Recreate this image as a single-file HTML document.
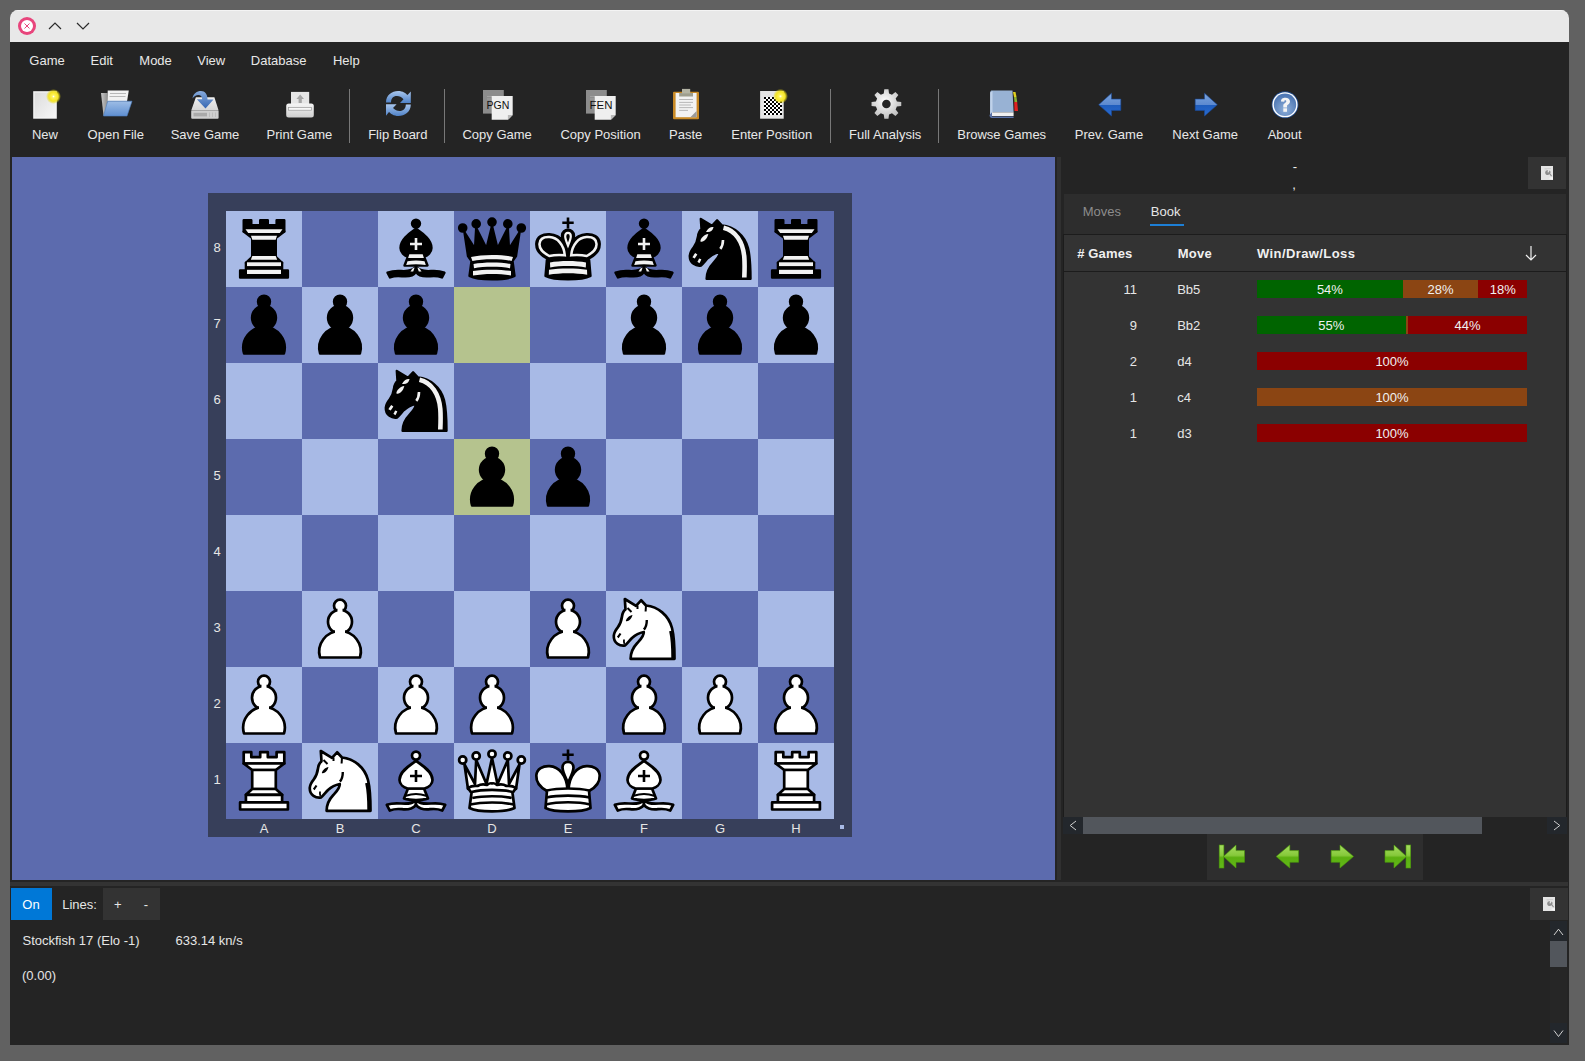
<!DOCTYPE html>
<html><head><meta charset="utf-8"><style>
html,body{margin:0;padding:0;width:1585px;height:1061px;overflow:hidden;background:#616161;font-family:"Liberation Sans", sans-serif;}
</style></head><body>
<div style="position:relative;width:1585px;height:1061px;overflow:hidden">
<div style="position:absolute;left:10px;top:10px;width:1559px;height:1035px;background:#242424;border-radius:8px 8px 0 0;overflow:hidden"><div style="position:absolute;left:0;top:0;width:1559px;height:32px;background:#e8e8e8;border-top:1px solid #f4f4f4;box-sizing:border-box"></div></div><svg style="position:absolute;left:16px;top:15px;" width="22" height="22" viewBox="0 0 22 22"><circle cx="11" cy="11" r="9" fill="#e8457c"/><circle cx="11" cy="11" r="6" fill="#fff"/><path d="M8.5 8.5 L13.5 13.5 M13.5 8.5 L8.5 13.5" stroke="#e8457c" stroke-width="1"/></svg><svg style="position:absolute;left:47px;top:20px;" width="16" height="12" viewBox="0 0 16 12"><path d="M2 9 L8 3 L14 9" fill="none" stroke="#2b2b2b" stroke-width="1.2"/></svg><svg style="position:absolute;left:75px;top:20px;" width="16" height="12" viewBox="0 0 16 12"><path d="M2 3 L8 9 L14 3" fill="none" stroke="#2b2b2b" stroke-width="1.2"/></svg><div style="position:absolute;left:-252.95px;width:600px;text-align:center;top:54.30px;font-size:13px;line-height:13px;color:#e8e8e8;font-weight:400;white-space:pre;">Game</div><div style="position:absolute;left:-198.3px;width:600px;text-align:center;top:54.30px;font-size:13px;line-height:13px;color:#e8e8e8;font-weight:400;white-space:pre;">Edit</div><div style="position:absolute;left:-144.45px;width:600px;text-align:center;top:54.30px;font-size:13px;line-height:13px;color:#e8e8e8;font-weight:400;white-space:pre;">Mode</div><div style="position:absolute;left:-88.75px;width:600px;text-align:center;top:54.30px;font-size:13px;line-height:13px;color:#e8e8e8;font-weight:400;white-space:pre;">View</div><div style="position:absolute;left:-21.350000000000023px;width:600px;text-align:center;top:54.30px;font-size:13px;line-height:13px;color:#e8e8e8;font-weight:400;white-space:pre;">Database</div><div style="position:absolute;left:46.25px;width:600px;text-align:center;top:54.30px;font-size:13px;line-height:13px;color:#e8e8e8;font-weight:400;white-space:pre;">Help</div><div style="position:absolute;left:-255.0px;width:600px;text-align:center;top:128.30px;font-size:13px;line-height:13px;color:#e8e8e8;font-weight:400;white-space:pre;">New</div><div style="position:absolute;left:-184.25px;width:600px;text-align:center;top:128.30px;font-size:13px;line-height:13px;color:#e8e8e8;font-weight:400;white-space:pre;">Open File</div><div style="position:absolute;left:-95.0px;width:600px;text-align:center;top:128.30px;font-size:13px;line-height:13px;color:#e8e8e8;font-weight:400;white-space:pre;">Save Game</div><div style="position:absolute;left:-0.6000000000000227px;width:600px;text-align:center;top:128.30px;font-size:13px;line-height:13px;color:#e8e8e8;font-weight:400;white-space:pre;">Print Game</div><div style="position:absolute;left:97.79999999999995px;width:600px;text-align:center;top:128.30px;font-size:13px;line-height:13px;color:#e8e8e8;font-weight:400;white-space:pre;">Flip Board</div><div style="position:absolute;left:197.14999999999998px;width:600px;text-align:center;top:128.30px;font-size:13px;line-height:13px;color:#e8e8e8;font-weight:400;white-space:pre;">Copy Game</div><div style="position:absolute;left:300.6px;width:600px;text-align:center;top:128.30px;font-size:13px;line-height:13px;color:#e8e8e8;font-weight:400;white-space:pre;">Copy Position</div><div style="position:absolute;left:385.70000000000005px;width:600px;text-align:center;top:128.30px;font-size:13px;line-height:13px;color:#e8e8e8;font-weight:400;white-space:pre;">Paste</div><div style="position:absolute;left:471.75px;width:600px;text-align:center;top:128.30px;font-size:13px;line-height:13px;color:#e8e8e8;font-weight:400;white-space:pre;">Enter Position</div><div style="position:absolute;left:585.2px;width:600px;text-align:center;top:128.30px;font-size:13px;line-height:13px;color:#e8e8e8;font-weight:400;white-space:pre;">Full Analysis</div><div style="position:absolute;left:701.7px;width:600px;text-align:center;top:128.30px;font-size:13px;line-height:13px;color:#e8e8e8;font-weight:400;white-space:pre;">Browse Games</div><div style="position:absolute;left:808.95px;width:600px;text-align:center;top:128.30px;font-size:13px;line-height:13px;color:#e8e8e8;font-weight:400;white-space:pre;">Prev. Game</div><div style="position:absolute;left:905.1500000000001px;width:600px;text-align:center;top:128.30px;font-size:13px;line-height:13px;color:#e8e8e8;font-weight:400;white-space:pre;">Next Game</div><div style="position:absolute;left:984.6500000000001px;width:600px;text-align:center;top:128.30px;font-size:13px;line-height:13px;color:#e8e8e8;font-weight:400;white-space:pre;">About</div><div style="position:absolute;left:349px;top:89px;width:1px;height:54px;background:#787878;"></div><div style="position:absolute;left:444px;top:89px;width:1px;height:54px;background:#787878;"></div><div style="position:absolute;left:830px;top:89px;width:1px;height:54px;background:#787878;"></div><div style="position:absolute;left:938px;top:89px;width:1px;height:54px;background:#787878;"></div><svg style="position:absolute;left:26px;top:84px;" width="40" height="40" viewBox="0 0 40 40"><defs><radialGradient id="glow"><stop offset="0" stop-color="#ffffff"/><stop offset="0.2" stop-color="#fff45c"/><stop offset="0.62" stop-color="#f4e424" stop-opacity="1"/><stop offset="1" stop-color="#e8d800" stop-opacity="0"/></radialGradient><linearGradient id="pg1" x1="0" y1="0" x2="1" y2="1"><stop offset="0" stop-color="#dcdcdc"/><stop offset="1" stop-color="#f6f6f6"/></linearGradient></defs><rect x="7.2" y="7.2" width="23.6" height="27.5" fill="#f4f4f4"/><rect x="8.6" y="8.6" width="20.8" height="24.7" fill="url(#pg1)"/><circle cx="27.5" cy="12.5" r="7.5" fill="url(#glow)"/></svg><svg style="position:absolute;left:96px;top:84px;" width="40" height="40" viewBox="0 0 40 40"><defs><linearGradient id="fo" x1="0" y1="0" x2="0" y2="1"><stop offset="0" stop-color="#9ebde6"/><stop offset="1" stop-color="#5f8fd0"/></linearGradient><linearGradient id="fb" x1="0" y1="0" x2="1" y2="0"><stop offset="0" stop-color="#c8c8c8"/><stop offset="1" stop-color="#8a8a8a"/></linearGradient></defs><path d="M5 9 H11.5 L12 31.5 H7.5 Z" fill="url(#fb)"/><path d="M11.7 6.5 H32.8 L31 17.5 H11.5 Z" fill="#f2f2f2"/><path d="M14 9.5 H30 M13.5 12.5 H29.5" stroke="#b8b8b8" stroke-width="1.2"/><path d="M11.7 17.2 H36 L31 32 H7.5 Z" fill="url(#fo)" stroke="#4d7fc2" stroke-width="0.6"/></svg><svg style="position:absolute;left:185px;top:84px;" width="40" height="40" viewBox="0 0 40 40"><defs><linearGradient id="sv" x1="0" y1="0" x2="0" y2="1"><stop offset="0" stop-color="#f0f0f0"/><stop offset="1" stop-color="#d6d6d6"/></linearGradient><linearGradient id="sa" x1="0" y1="0" x2="0" y2="1"><stop offset="0" stop-color="#86aadc"/><stop offset="1" stop-color="#3566b2"/></linearGradient></defs><path d="M10.9 13.2 H29.4 L33.6 26.4 H6.2 Z" fill="url(#sv)"/><rect x="6.2" y="26.4" width="27.4" height="8.3" rx="1" fill="#cfcfcf"/><rect x="8.5" y="28.8" width="13.5" height="3.6" fill="#aaaaaa"/><path d="M24.5 28.5 V33 M27.5 28.5 V33 M30.5 28.5 V33" stroke="#bdbdbd" stroke-width="1"/><path d="M7.5 14.5 C8 9.5 12 7 16 7 C20 7 22.5 10 22.5 15.5 H28.5 L20.5 24.5 L11.8 15.2 H17.2 C17 12 15.5 11 13.5 11 C11 11 9 12.5 7.5 14.5 Z" fill="url(#sa)"/></svg><svg style="position:absolute;left:280px;top:84px;" width="40" height="40" viewBox="0 0 40 40"><defs><linearGradient id="pr" x1="0" y1="0" x2="0" y2="1"><stop offset="0" stop-color="#f6f6f6"/><stop offset="1" stop-color="#cfcfcf"/></linearGradient></defs><rect x="11" y="7.9" width="18.2" height="14" fill="#e6e6e6"/><path d="M20.2 10.5 L24 15 H21.8 V19 H18.6 V15 H16.4 Z" fill="#a6a6a6"/><rect x="6.2" y="19.4" width="27.6" height="14" rx="2.5" fill="url(#pr)"/><rect x="8.5" y="23.6" width="23" height="2.6" fill="#f8f8f8" stroke="#9a9a9a" stroke-width="0.7"/></svg><svg style="position:absolute;left:378px;top:84px;" width="40" height="40" viewBox="0 0 40 40"><defs><linearGradient id="fl" x1="0" y1="0" x2="0" y2="1"><stop offset="0" stop-color="#a9c6ec"/><stop offset="1" stop-color="#4f82c8"/></linearGradient></defs><path d="M8 18.5 C8 11 14 7 20 7 C25 7 28 9.5 29.5 11 L32.8 7.5 V19 H22 L25.5 15.2 C23.5 13 21.5 12 19 12 C15 12 13 14.5 13 18.5 Z" fill="url(#fl)"/><path d="M32.8 20.5 C32.8 28 26.5 32 20.5 32 C15.5 32 12.5 29.5 11 28 L8 31.8 V20.2 H18.6 L15 24 C17 26 19 27 21.5 27 C25.5 27 27.8 24.5 27.8 20.5 Z" fill="url(#fl)"/></svg><svg style="position:absolute;left:477px;top:84px;" width="40" height="40" viewBox="0 0 40 40"><rect x="6" y="6" width="20.8" height="23.6" fill="#8c8c8c"/><path d="M10 12.5 H20 M10 15 H14" stroke="#a8a8a8" stroke-width="0.8"/><path d="M14.7 12 H35.7 V31 L30.9 35.8 H14.7 Z" fill="#efefef"/><path d="M30.9 35.8 V31 H35.7 Z" fill="#b8b8b8"/><text x="21" y="25.1" text-anchor="middle" font-family="Liberation Sans" font-size="10.8" fill="#111" textLength="22.9" lengthAdjust="spacingAndGlyphs">PGN</text></svg><svg style="position:absolute;left:580px;top:84px;" width="40" height="40" viewBox="0 0 40 40"><rect x="6" y="6" width="20.8" height="23.6" fill="#8c8c8c"/><path d="M10 12.5 H20 M10 15 H14" stroke="#a8a8a8" stroke-width="0.8"/><path d="M14.7 12 H35.7 V31 L30.9 35.8 H14.7 Z" fill="#efefef"/><path d="M30.9 35.8 V31 H35.7 Z" fill="#b8b8b8"/><text x="21" y="25.1" text-anchor="middle" font-family="Liberation Sans" font-size="10.8" fill="#111" textLength="22.9" lengthAdjust="spacingAndGlyphs">FEN</text></svg><svg style="position:absolute;left:666px;top:84px;" width="40" height="40" viewBox="0 0 40 40"><rect x="7" y="7.7" width="26" height="27.6" rx="1" fill="#c98a26"/><rect x="9.6" y="9" width="21" height="24.2" fill="#f2f2f2"/><path d="M13.2 9 H27 V12.5 H13.2 Z" fill="#9e9e8e"/><rect x="16" y="4.9" width="8.2" height="4.5" fill="#b4b4a4"/><path d="M13.2 15.5 H27 M13.2 18.4 H27 M13.2 21 H25 M13.2 23.6 H27 M13.2 26.4 H22" stroke="#b0b0b0" stroke-width="0.9"/><path d="M24.3 33.2 L30.6 27 V33.2 Z" fill="#9a9a9a"/></svg><svg style="position:absolute;left:752px;top:84px;" width="40" height="40" viewBox="0 0 40 40"><defs><radialGradient id="glow2"><stop offset="0" stop-color="#ffffff"/><stop offset="0.2" stop-color="#fff45c"/><stop offset="0.62" stop-color="#f4e424" stop-opacity="1"/><stop offset="1" stop-color="#e8d800" stop-opacity="0"/></radialGradient></defs><rect x="8.1" y="7" width="23.6" height="27.7" fill="#e4e4e4"/><rect x="12" y="13" width="17.8" height="18" fill="#fff"/><rect x="12" y="13" width="2" height="2" fill="#000"/><rect x="12" y="17" width="2" height="2" fill="#000"/><rect x="12" y="21" width="2" height="2" fill="#000"/><rect x="12" y="25" width="2" height="2" fill="#000"/><rect x="12" y="29" width="2" height="2" fill="#000"/><rect x="14" y="15" width="2" height="2" fill="#000"/><rect x="14" y="19" width="2" height="2" fill="#000"/><rect x="14" y="23" width="2" height="2" fill="#000"/><rect x="14" y="27" width="2" height="2" fill="#000"/><rect x="16" y="13" width="2" height="2" fill="#000"/><rect x="16" y="17" width="2" height="2" fill="#000"/><rect x="16" y="21" width="2" height="2" fill="#000"/><rect x="16" y="25" width="2" height="2" fill="#000"/><rect x="16" y="29" width="2" height="2" fill="#000"/><rect x="18" y="15" width="2" height="2" fill="#000"/><rect x="18" y="19" width="2" height="2" fill="#000"/><rect x="18" y="23" width="2" height="2" fill="#000"/><rect x="18" y="27" width="2" height="2" fill="#000"/><rect x="20" y="13" width="2" height="2" fill="#000"/><rect x="20" y="17" width="2" height="2" fill="#000"/><rect x="20" y="21" width="2" height="2" fill="#000"/><rect x="20" y="25" width="2" height="2" fill="#000"/><rect x="20" y="29" width="2" height="2" fill="#000"/><rect x="22" y="15" width="2" height="2" fill="#000"/><rect x="22" y="19" width="2" height="2" fill="#000"/><rect x="22" y="23" width="2" height="2" fill="#000"/><rect x="22" y="27" width="2" height="2" fill="#000"/><rect x="24" y="13" width="2" height="2" fill="#000"/><rect x="24" y="17" width="2" height="2" fill="#000"/><rect x="24" y="21" width="2" height="2" fill="#000"/><rect x="24" y="25" width="2" height="2" fill="#000"/><rect x="24" y="29" width="2" height="2" fill="#000"/><rect x="26" y="15" width="2" height="2" fill="#000"/><rect x="26" y="19" width="2" height="2" fill="#000"/><rect x="26" y="23" width="2" height="2" fill="#000"/><rect x="26" y="27" width="2" height="2" fill="#000"/><rect x="28" y="13" width="2" height="2" fill="#000"/><rect x="28" y="17" width="2" height="2" fill="#000"/><rect x="28" y="21" width="2" height="2" fill="#000"/><rect x="28" y="25" width="2" height="2" fill="#000"/><rect x="28" y="29" width="2" height="2" fill="#000"/><circle cx="28.5" cy="12.3" r="7.5" fill="url(#glow2)"/></svg><svg style="position:absolute;left:866px;top:84px;" width="40" height="40" viewBox="0 0 40 40"><defs><radialGradient id="ge" cx="0.45" cy="0.4" r="0.7"><stop offset="0" stop-color="#ffffff"/><stop offset="1" stop-color="#b4b4b4"/></radialGradient></defs><path d="M17.79,9.52 L18.31,5.15 L22.49,5.15 L23.01,9.52 L25.96,10.74 L29.43,8.02 L32.38,10.97 L29.66,14.44 L30.88,17.39 L35.25,17.91 L35.25,22.09 L30.88,22.61 L29.66,25.56 L32.38,29.03 L29.43,31.98 L25.96,29.26 L23.01,30.48 L22.49,34.85 L18.31,34.85 L17.79,30.48 L14.84,29.26 L11.37,31.98 L8.42,29.03 L11.14,25.56 L9.92,22.61 L5.55,22.09 L5.55,17.91 L9.92,17.39 L11.14,14.44 L8.42,10.97 L11.37,8.02 L14.84,10.74 Z" fill="url(#ge)"/><circle cx="20.4" cy="20" r="4.3" fill="#242424"/></svg><svg style="position:absolute;left:983px;top:84px;" width="40" height="40" viewBox="0 0 40 40"><path d="M30 8 H32.5 L33.5 13 H31 Z" fill="#e0d020"/><path d="M31 13 H33.5 L34.2 18 H31.5 Z" fill="#8cb030"/><path d="M31.2 18 H34.2 L35 27 H31.5 Z" fill="#e02020"/><path d="M7.2 8.5 C7.2 7 8 6.4 9 6.4 H29.5 L30.6 28.3 H9 L7 31 Z" fill="#98b2d4"/><path d="M7.2 8.5 V31 L9.5 28.3 V7" fill="#c0d2ea"/><path d="M9 28.3 H30.6 V32 H9 Z" fill="#f0f0f0"/><path d="M6.5 31 L9 28.3 V32.5 H30.6 V34 H9 C7.5 34 6.5 33 6.5 31 Z" fill="#5a72a8"/></svg><svg style="position:absolute;left:1090px;top:84px;" width="40" height="40" viewBox="0 0 40 40"><defs><linearGradient id="ar" x1="0" y1="0" x2="0" y2="1"><stop offset="0" stop-color="#7aa3dc"/><stop offset="0.5" stop-color="#5d8ad0"/><stop offset="0.52" stop-color="#1f5dbd"/><stop offset="1" stop-color="#2a6cd0"/></linearGradient></defs><path d="M8.7 20.75 L21.5 9.2 V15.1 H30.8 V26.4 H21.5 V32 Z" fill="url(#ar)" stroke="#1a4a9a" stroke-width="0.6"/></svg><svg style="position:absolute;left:1187px;top:84px;" width="40" height="40" viewBox="0 0 40 40"><defs><linearGradient id="ar2" x1="0" y1="0" x2="0" y2="1"><stop offset="0" stop-color="#7aa3dc"/><stop offset="0.5" stop-color="#5d8ad0"/><stop offset="0.52" stop-color="#1f5dbd"/><stop offset="1" stop-color="#2a6cd0"/></linearGradient></defs><path d="M30.3 20.75 L17.5 9.2 V15.1 H8.2 V26.4 H17.5 V32 Z" fill="url(#ar2)" stroke="#1a4a9a" stroke-width="0.6"/></svg><svg style="position:absolute;left:1265px;top:84px;" width="40" height="40" viewBox="0 0 40 40"><defs><radialGradient id="ab" cx="0.5" cy="0.7" r="0.6"><stop offset="0" stop-color="#8fb0da"/><stop offset="1" stop-color="#4f78b4"/></radialGradient></defs><circle cx="20" cy="20.75" r="13.4" fill="#1e4a8c"/><circle cx="20" cy="20.75" r="12.6" fill="#ffffff"/><circle cx="20" cy="20.75" r="11.2" fill="url(#ab)"/><path d="M16 17.5 C16 14.5 18 13.7 20.3 13.7 C23 13.7 25 15 25 17.5 C25 19.8 23 20.5 22 21.5 V23.5 H18.3 V21 C18.3 19.5 21.3 18.7 21.3 17.5 C21.3 16.5 20.8 16.3 20.2 16.3 C19.5 16.3 19.3 16.8 19.3 17.8 Z" fill="#f4f4f4"/><rect x="18.3" y="24.3" width="3.7" height="3.5" fill="#f4f4f4"/></svg><div style="position:absolute;left:12px;top:157px;width:1043px;height:723px;background:#5c6bae;"></div><div style="position:absolute;left:208px;top:193px;width:644px;height:644px;background:#373f5a;"></div><svg style="position:absolute;left:226px;top:211px;" width="608" height="608" viewBox="0 0 608 608"><rect x="0" y="0" width="76" height="76" fill="#a8bae6"/><rect x="76" y="0" width="76" height="76" fill="#5c6bae"/><rect x="152" y="0" width="76" height="76" fill="#a8bae6"/><rect x="228" y="0" width="76" height="76" fill="#5c6bae"/><rect x="304" y="0" width="76" height="76" fill="#a8bae6"/><rect x="380" y="0" width="76" height="76" fill="#5c6bae"/><rect x="456" y="0" width="76" height="76" fill="#a8bae6"/><rect x="532" y="0" width="76" height="76" fill="#5c6bae"/><rect x="0" y="76" width="76" height="76" fill="#5c6bae"/><rect x="76" y="76" width="76" height="76" fill="#a8bae6"/><rect x="152" y="76" width="76" height="76" fill="#5c6bae"/><rect x="228" y="76" width="76" height="76" fill="#b5c38e"/><rect x="304" y="76" width="76" height="76" fill="#5c6bae"/><rect x="380" y="76" width="76" height="76" fill="#a8bae6"/><rect x="456" y="76" width="76" height="76" fill="#5c6bae"/><rect x="532" y="76" width="76" height="76" fill="#a8bae6"/><rect x="0" y="152" width="76" height="76" fill="#a8bae6"/><rect x="76" y="152" width="76" height="76" fill="#5c6bae"/><rect x="152" y="152" width="76" height="76" fill="#a8bae6"/><rect x="228" y="152" width="76" height="76" fill="#5c6bae"/><rect x="304" y="152" width="76" height="76" fill="#a8bae6"/><rect x="380" y="152" width="76" height="76" fill="#5c6bae"/><rect x="456" y="152" width="76" height="76" fill="#a8bae6"/><rect x="532" y="152" width="76" height="76" fill="#5c6bae"/><rect x="0" y="228" width="76" height="76" fill="#5c6bae"/><rect x="76" y="228" width="76" height="76" fill="#a8bae6"/><rect x="152" y="228" width="76" height="76" fill="#5c6bae"/><rect x="228" y="228" width="76" height="76" fill="#b5c38e"/><rect x="304" y="228" width="76" height="76" fill="#5c6bae"/><rect x="380" y="228" width="76" height="76" fill="#a8bae6"/><rect x="456" y="228" width="76" height="76" fill="#5c6bae"/><rect x="532" y="228" width="76" height="76" fill="#a8bae6"/><rect x="0" y="304" width="76" height="76" fill="#a8bae6"/><rect x="76" y="304" width="76" height="76" fill="#5c6bae"/><rect x="152" y="304" width="76" height="76" fill="#a8bae6"/><rect x="228" y="304" width="76" height="76" fill="#5c6bae"/><rect x="304" y="304" width="76" height="76" fill="#a8bae6"/><rect x="380" y="304" width="76" height="76" fill="#5c6bae"/><rect x="456" y="304" width="76" height="76" fill="#a8bae6"/><rect x="532" y="304" width="76" height="76" fill="#5c6bae"/><rect x="0" y="380" width="76" height="76" fill="#5c6bae"/><rect x="76" y="380" width="76" height="76" fill="#a8bae6"/><rect x="152" y="380" width="76" height="76" fill="#5c6bae"/><rect x="228" y="380" width="76" height="76" fill="#a8bae6"/><rect x="304" y="380" width="76" height="76" fill="#5c6bae"/><rect x="380" y="380" width="76" height="76" fill="#a8bae6"/><rect x="456" y="380" width="76" height="76" fill="#5c6bae"/><rect x="532" y="380" width="76" height="76" fill="#a8bae6"/><rect x="0" y="456" width="76" height="76" fill="#a8bae6"/><rect x="76" y="456" width="76" height="76" fill="#5c6bae"/><rect x="152" y="456" width="76" height="76" fill="#a8bae6"/><rect x="228" y="456" width="76" height="76" fill="#5c6bae"/><rect x="304" y="456" width="76" height="76" fill="#a8bae6"/><rect x="380" y="456" width="76" height="76" fill="#5c6bae"/><rect x="456" y="456" width="76" height="76" fill="#a8bae6"/><rect x="532" y="456" width="76" height="76" fill="#5c6bae"/><rect x="0" y="532" width="76" height="76" fill="#5c6bae"/><rect x="76" y="532" width="76" height="76" fill="#a8bae6"/><rect x="152" y="532" width="76" height="76" fill="#5c6bae"/><rect x="228" y="532" width="76" height="76" fill="#a8bae6"/><rect x="304" y="532" width="76" height="76" fill="#5c6bae"/><rect x="380" y="532" width="76" height="76" fill="#a8bae6"/><rect x="456" y="532" width="76" height="76" fill="#5c6bae"/><rect x="532" y="532" width="76" height="76" fill="#a8bae6"/></svg><div style="position:absolute;left:840px;top:825px;width:4px;height:4px;background:#a8bae6;"></div><div style="position:absolute;left:-83px;width:600px;text-align:center;top:241.40px;font-size:13px;line-height:13px;color:#e6e6e6;font-weight:400;white-space:pre;">8</div><div style="position:absolute;left:-36px;width:600px;text-align:center;top:822.00px;font-size:13px;line-height:13px;color:#e6e6e6;font-weight:400;white-space:pre;">A</div><div style="position:absolute;left:-83px;width:600px;text-align:center;top:317.40px;font-size:13px;line-height:13px;color:#e6e6e6;font-weight:400;white-space:pre;">7</div><div style="position:absolute;left:40px;width:600px;text-align:center;top:822.00px;font-size:13px;line-height:13px;color:#e6e6e6;font-weight:400;white-space:pre;">B</div><div style="position:absolute;left:-83px;width:600px;text-align:center;top:393.40px;font-size:13px;line-height:13px;color:#e6e6e6;font-weight:400;white-space:pre;">6</div><div style="position:absolute;left:116px;width:600px;text-align:center;top:822.00px;font-size:13px;line-height:13px;color:#e6e6e6;font-weight:400;white-space:pre;">C</div><div style="position:absolute;left:-83px;width:600px;text-align:center;top:469.40px;font-size:13px;line-height:13px;color:#e6e6e6;font-weight:400;white-space:pre;">5</div><div style="position:absolute;left:192px;width:600px;text-align:center;top:822.00px;font-size:13px;line-height:13px;color:#e6e6e6;font-weight:400;white-space:pre;">D</div><div style="position:absolute;left:-83px;width:600px;text-align:center;top:545.40px;font-size:13px;line-height:13px;color:#e6e6e6;font-weight:400;white-space:pre;">4</div><div style="position:absolute;left:268px;width:600px;text-align:center;top:822.00px;font-size:13px;line-height:13px;color:#e6e6e6;font-weight:400;white-space:pre;">E</div><div style="position:absolute;left:-83px;width:600px;text-align:center;top:621.40px;font-size:13px;line-height:13px;color:#e6e6e6;font-weight:400;white-space:pre;">3</div><div style="position:absolute;left:344px;width:600px;text-align:center;top:822.00px;font-size:13px;line-height:13px;color:#e6e6e6;font-weight:400;white-space:pre;">F</div><div style="position:absolute;left:-83px;width:600px;text-align:center;top:697.40px;font-size:13px;line-height:13px;color:#e6e6e6;font-weight:400;white-space:pre;">2</div><div style="position:absolute;left:420px;width:600px;text-align:center;top:822.00px;font-size:13px;line-height:13px;color:#e6e6e6;font-weight:400;white-space:pre;">G</div><div style="position:absolute;left:-83px;width:600px;text-align:center;top:773.40px;font-size:13px;line-height:13px;color:#e6e6e6;font-weight:400;white-space:pre;">1</div><div style="position:absolute;left:496px;width:600px;text-align:center;top:822.00px;font-size:13px;line-height:13px;color:#e6e6e6;font-weight:400;white-space:pre;">H</div><svg style="position:absolute;left:226px;top:211px;" width="608" height="608" viewBox="0 0 608 608"><defs><symbol id="bp" viewBox="0 0 76 76"><g fill="#000" stroke="#000" stroke-width="2.4" stroke-linejoin="round"><circle cx="38" cy="14.7" r="6"/><circle cx="38" cy="30.8" r="12"/><path d="M18,66.5 A20.8,20.8 0 1 1 58,66.5 Z"/></g><g fill="#f2f2f2"></g></symbol><symbol id="wp" viewBox="0 0 76 76"><g fill="#fff" stroke="#000" stroke-width="2.7" stroke-linejoin="round"><circle cx="38" cy="14.7" r="6"/><circle cx="38" cy="30.8" r="12"/><path d="M18,66.5 A20.8,20.8 0 1 1 58,66.5 Z"/></g><rect x="35.5" y="17" width="5" height="6" fill="#fff"/><rect x="33" y="38" width="10" height="6" fill="#fff"/></symbol><symbol id="br" viewBox="0 0 76 76"><g fill="#000" stroke="#000" stroke-width="2.4" stroke-linejoin="round"><path d="M17.7,9.2 H25.3 V14.2 H34.2 V9.2 H41.8 V14.2 H50.6 V9.2 H58.3 V20.5 H17.7 Z"/><path d="M17.7,20.5 H58.3 L49.8,27 H26.2 Z"/><rect x="26.2" y="27" width="23.6" height="19"/><path d="M26.2,46 H49.8 L56.1,51.8 H19.9 Z"/><rect x="19.9" y="51.8" width="36.2" height="7.6"/><rect x="14.1" y="59.4" width="47.8" height="7.1"/></g><g fill="#f2f2f2"><path d="M19.5,18.3 H56.5 L53.8,22 H22.2 Z"/><path d="M25,24.7 H51 L49.7,28.8 H26.3 Z"/><path d="M26.3,45 H49.7 L51.2,48.8 H24.8 Z"/><rect x="21" y="51.3" width="34" height="3.8"/><rect x="21" y="58.8" width="34" height="4.2"/></g></symbol><symbol id="wr" viewBox="0 0 76 76"><g fill="#fff" stroke="#000" stroke-width="2.7" stroke-linejoin="round"><path d="M17.7,9.2 H25.3 V14.2 H34.2 V9.2 H41.8 V14.2 H50.6 V9.2 H58.3 V20.5 H17.7 Z"/><path d="M17.7,20.5 H58.3 L49.8,27 H26.2 Z"/><rect x="26.2" y="27" width="23.6" height="19"/><path d="M26.2,46 H49.8 L56.1,51.8 H19.9 Z"/><rect x="19.9" y="51.8" width="36.2" height="7.6"/><rect x="14.1" y="59.4" width="47.8" height="7.1"/></g></symbol><symbol id="bb" viewBox="0 0 76 76"><g fill="#000" stroke="#000" stroke-width="2.4" stroke-linejoin="round"><circle cx="38" cy="12.6" r="4"/><path d="M38,17.8 C33,21.5 22.5,28 22.5,37 C22.5,41.5 26.5,44.5 29.5,45.5 H46.5 C49.5,44.5 53.5,41.5 53.5,37 C53.5,28 43,21.5 38,17.8 Z"/><path d="M30,45.5 H46 L49.5,54.5 H26.5 Z"/><path d="M38,55.5 C35.5,59.5 31,60.5 23,60 C17,59.6 13,60.3 9.5,61.7 L12,66.5 C15.5,65 19.5,64.7 24,65.2 C31,66 36,64 38,60.8 C40,64 45,66 52,65.2 C56.5,64.7 60.5,65 64,66.5 L66.5,61.7 C63,60.3 59,59.6 53,60 C45,60.5 40.5,59.5 38,55.5 Z"/></g><g fill="#f2f2f2"><path d="M36.7,27 H39.3 V31.7 H44 V34.3 H39.3 V39 H36.7 V34.3 H32 V31.7 H36.7 Z"/><path d="M31.3,43.3 H44.7 L45.9,47 H30.1 Z"/><path d="M29.5,50.2 C35,49.3 41,49.3 46.5,50.2 L47.8,54 C41,53 35,53 28.2,54 Z"/><path d="M34.5,57.5 L36.6,56.5 L35.2,60.6 L32.5,60.6 Z"/><path d="M41.5,57.5 L39.4,56.5 L40.8,60.6 L43.5,60.6 Z"/></g></symbol><symbol id="wb" viewBox="0 0 76 76"><g fill="#fff" stroke="#000" stroke-width="2.7" stroke-linejoin="round"><circle cx="38" cy="12.6" r="4"/><path d="M38,56 C36,60.5 31,61 23,60.5 C17,60 12.5,60.5 8.8,61.8 L11.8,67.5 C15.5,66 19.5,65.7 24,66.2 C31,67 36.5,65 38,61.5 Z"/><path d="M38,56 C40,60.5 45,61 53,60.5 C59,60 63.5,60.5 67.2,61.8 L64.2,67.5 C60.5,66 56.5,65.7 52,66.2 C45,67 39.5,65 38,61.5 Z"/><path d="M30,45.5 H46 L50,55.5 C44,57.5 32,57.5 26,55.5 Z"/><path d="M38,17.8 C33,21.5 21.5,28 21.5,37 C21.5,41.5 26,44.5 29.5,45.5 H46.5 C50,44.5 54.5,41.5 54.5,37 C54.5,28 43,21.5 38,17.8 Z"/></g><path d="M38,27 V39 M32,33 H44" stroke="#000" stroke-width="2.6" fill="none"/><path d="M27.8,52.8 C34,50.6 42,50.6 48.2,52.8" stroke="#000" stroke-width="2" fill="none"/></symbol><symbol id="bq" viewBox="0 0 76 76"><g fill="#000" stroke="#000" stroke-width="2.4" stroke-linejoin="round"><path d="M10.5,21.5 L21,38 L22.2,17 L32.5,37.5 L38,15 L43.5,37.5 L53.8,17 L55,38 L65.5,21.5 L62,45 L58.5,50 L60.5,65 C52,69.5 24,69.5 15.5,65 L17.5,50 L14,45 Z"/><circle cx="8.7" cy="17" r="3.6"/><circle cx="22.2" cy="12.9" r="3.6"/><circle cx="38" cy="11.1" r="3.6"/><circle cx="53.8" cy="12.9" r="3.6"/><circle cx="67.3" cy="17" r="3.6"/></g><g fill="#f2f2f2"><path d="M17,46 C28,43.2 48,43.2 59,46 L57.6,50 C47,47.8 29,47.8 18.4,50 Z"/><path d="M19.5,53 C30,51 46,51 56.5,53 L56,57.2 C46,55.4 30,55.4 20,57.2 Z"/><path d="M19,60 C30,58.3 46,58.3 57,60 L57,64.5 C46,62.4 30,62.4 19,64.5 Z"/></g></symbol><symbol id="wq" viewBox="0 0 76 76"><g fill="#fff" stroke="#000" stroke-width="2.7" stroke-linejoin="round"><path d="M10.5,21.5 L21,41 L22.2,17 L32.5,41 L38,15 L43.5,41 L53.8,17 L55,41 L65.5,21.5 L62,46 H14 Z"/><path d="M14,45 C17,43 20,42.5 23.5,43 C26,41.5 29.5,41 33,42 C35,40.5 37,40 38,40.5 C39,40 41,40.5 43,42 C46.5,41 50,41.5 52.5,43 C56,42.5 59,43 62,45 L58.5,50 L60.5,65 C52,69.5 24,69.5 15.5,65 L17.5,50 Z"/><circle cx="8.7" cy="17" r="3.6"/><circle cx="22.2" cy="12.9" r="3.6"/><circle cx="38" cy="11.1" r="3.6"/><circle cx="53.8" cy="12.9" r="3.6"/><circle cx="67.3" cy="17" r="3.6"/></g><path d="M17.6,49 C28,46.2 48,46.2 58.4,49 M18.3,55 C29,52.7 47,52.7 57.7,55 M16.2,61.6 C28,58.8 48,58.8 59.8,61.6" stroke="#000" stroke-width="2.6" fill="none"/></symbol><symbol id="bk" viewBox="0 0 76 76"><g fill="#000" stroke="#000" stroke-width="2.4" stroke-linejoin="round"><path d="M38,6.5 V17.5 M32.3,11.8 H43.7" stroke-width="2.6" fill="none"/><path d="M17,47.5 C9.5,43.5 6,38.5 6.3,32.5 C6.8,25.5 13,22.8 19.5,23.2 C26,23.6 31,27 33.8,30.5 C32.5,27.5 32,25.8 32,24.5 C32,21 34.8,18.8 38,18.8 C41.2,18.8 44,21 44,24.5 C44,25.8 43.5,27.5 42.2,30.5 C45,27 50,23.6 56.5,23.2 C63,22.8 69.2,25.5 69.7,32.5 C70,38.5 66.5,43.5 59,47.5 L60.5,65 C52,69.5 24,69.5 15.5,65 Z"/></g><g fill="#f2f2f2"><g fill="none" stroke="#f2f2f2"><path d="M19.2,45 C12.5,41.5 9.2,37.5 9.5,32.8 C9.9,27.5 14.5,25.8 19.5,26.1 C27.5,26.6 33.8,33.5 34.8,44.3 C29,43.8 24,44 19.2,45 Z" stroke-width="2.5"/><path d="M56.8,45 C63.5,41.5 66.8,37.5 66.5,32.8 C66.1,27.5 61.5,25.8 56.5,26.1 C48.5,26.6 42.2,33.5 41.2,44.3 C47,43.8 52,44 56.8,45 Z" stroke-width="2.5"/><path d="M38,34.5 C36.8,31.5 35.2,28 35.2,25.2 C35.2,23.2 36.4,21.8 38,21.8 C39.6,21.8 40.8,23.2 40.8,25.2 C40.8,28 39.2,31.5 38,34.5 Z" stroke-width="2.2"/></g><path d="M20,51.6 C30,49.6 46,49.6 56,51.6 L55.8,56.4 C46,54.6 30,54.6 20.2,56.4 Z"/><path d="M19,58.8 C30,57 46,57 57,58.8 L57.2,63.8 C46,61.8 30,61.8 18.8,63.8 Z"/></g></symbol><symbol id="wk" viewBox="0 0 76 76"><g fill="#fff" stroke="#000" stroke-width="2.7" stroke-linejoin="round"><path d="M38,6.5 V17.5 M32.3,11.8 H43.7" stroke-width="2.6" fill="none"/><path d="M17,48 C9.5,44 6,38.5 6.3,32.5 C6.8,25.5 13,22.8 19.5,23.2 C29,23.8 36.5,32 37.5,46.5 Z"/><path d="M59,48 C66.5,44 70,38.5 69.7,32.5 C69.2,25.5 63,22.8 56.5,23.2 C47,23.8 39.5,32 38.5,46.5 Z"/><path d="M38,40 C36,35 32.5,29 32.5,24.5 C32.5,21 35,18.8 38,18.8 C41,18.8 43.5,21 43.5,24.5 C43.5,29 40,35 38,40 Z"/><path d="M38,38 V46"/><path d="M17,47.5 C28,44.8 48,44.8 59,47.5 L60.5,65 C52,69.5 24,69.5 15.5,65 Z"/></g><path d="M16.4,54.6 C28,52 48,52 59.6,54.6 M15.9,61.4 C28,58.6 48,58.6 60.1,61.4" stroke="#000" stroke-width="2.6" fill="none"/></symbol><symbol id="bn" viewBox="0 0 76 76"><g fill="#000" stroke="#000" stroke-width="2.4" stroke-linejoin="round"><path d="M18.8,8 L30,14.8 L35.1,9.3 L40,14.5 C52,15.8 62.5,24 66,37 C68,45 68.5,55 68.5,67.8 H24.6 C24.6,62 27,56.5 31.3,52 C35,48 37.8,45.5 37.8,41 C33.8,41.8 29.5,43.8 26,47 C23.5,49.5 21.5,52.5 19,54.5 C16.5,55 13.5,54.2 11.5,52.8 C8.8,51 7.6,47.8 7.8,44.6 C8,41.8 9.8,38.8 11.8,36.3 C13.8,33.8 15.2,31 16,25.5 C16.5,21.5 17.8,19.5 19.5,18.3 Z"/></g><g fill="#f2f2f2"><path d="M41.5,16.8 C53.5,19.5 61,31 62.3,46 C62.9,54 62.6,60 62.3,66.5" stroke="#f2f2f2" stroke-width="4.6" fill="none"/><path d="M18.3,30.2 C19,26.5 22.5,23.6 26.3,23 C25.8,25.5 24.5,27.8 22.8,29.3 C21.3,30.6 19.5,31.2 18.3,30.2 Z" fill="#f2f2f2"/><path d="M25.2,20.3 C26.5,18.2 28.8,16.8 30.6,16.8 C30,18.8 28,20.5 25.2,20.3 Z" fill="#f2f2f2" stroke="#f2f2f2" stroke-width="1.4"/><path d="M41,29 C41,33 40,35.8 38.3,37.8" stroke="#f2f2f2" stroke-width="2.6" fill="none"/><path d="M14.3,42.8 C13.2,44.3 12.2,45.6 11.6,46.8" stroke="#f2f2f2" stroke-width="2.6" fill="none"/><path d="M18.2,47.8 C17.7,49.3 17.1,50.5 16.4,51.5" stroke="#f2f2f2" stroke-width="2.4" fill="none"/></g></symbol><symbol id="wn" viewBox="0 0 76 76"><g fill="#fff" stroke="#000" stroke-width="2.7" stroke-linejoin="round"><path d="M18.8,8 L30,14.8 L35.1,9.3 L40,14.5 C52,15.8 62.5,24 66,37 C68,45 68.5,55 68.5,67.8 H24.6 C24.6,62 27,56.5 31.3,52 C35,48 37.8,45.5 37.8,41 C33.8,41.8 29.5,43.8 26,47 C23.5,49.5 21.5,52.5 19,54.5 C16.5,55 13.5,54.2 11.5,52.8 C8.8,51 7.6,47.8 7.8,44.6 C8,41.8 9.8,38.8 11.8,36.3 C13.8,33.8 15.2,31 16,25.5 C16.5,21.5 17.8,19.5 19.5,18.3 Z"/></g><path d="M64.8,40 C66.6,48 67,56 67,67" stroke="#000" stroke-width="3.4" fill="none"/><path d="M19.8,30 C20.5,27 23.5,24.4 26.5,24 C26,26.5 24.5,28.5 23,29.5 C21.8,30.3 20.5,30.6 19.8,30 Z" fill="#000"/><path d="M21.5,17 L25.5,21 M31.5,14.5 L31.5,18 M40,14.5 L39.6,20.5" stroke="#000" stroke-width="2" fill="none"/><path d="M40.8,29 C40.8,33.5 40,36.5 37.8,38.5" stroke="#000" stroke-width="2.4" fill="none"/><path d="M14.5,42.5 C13.5,44 12.5,45.5 11.8,46.5" stroke="#000" stroke-width="2.2" fill="none"/><path d="M18,48.5 C17.8,50 17.8,51.5 18.5,53" stroke="#000" stroke-width="1.8" fill="none"/></symbol></defs><use href="#br" x="0" y="0" width="76" height="76"/><use href="#bb" x="152" y="0" width="76" height="76"/><use href="#bq" x="228" y="0" width="76" height="76"/><use href="#bk" x="304" y="0" width="76" height="76"/><use href="#bb" x="380" y="0" width="76" height="76"/><use href="#bn" x="456" y="0" width="76" height="76"/><use href="#br" x="532" y="0" width="76" height="76"/><use href="#bp" x="0" y="76" width="76" height="76"/><use href="#bp" x="76" y="76" width="76" height="76"/><use href="#bp" x="152" y="76" width="76" height="76"/><use href="#bp" x="380" y="76" width="76" height="76"/><use href="#bp" x="456" y="76" width="76" height="76"/><use href="#bp" x="532" y="76" width="76" height="76"/><use href="#bn" x="152" y="152" width="76" height="76"/><use href="#bp" x="228" y="228" width="76" height="76"/><use href="#bp" x="304" y="228" width="76" height="76"/><use href="#wp" x="76" y="380" width="76" height="76"/><use href="#wp" x="304" y="380" width="76" height="76"/><use href="#wn" x="380" y="380" width="76" height="76"/><use href="#wp" x="0" y="456" width="76" height="76"/><use href="#wp" x="152" y="456" width="76" height="76"/><use href="#wp" x="228" y="456" width="76" height="76"/><use href="#wp" x="380" y="456" width="76" height="76"/><use href="#wp" x="456" y="456" width="76" height="76"/><use href="#wp" x="532" y="456" width="76" height="76"/><use href="#wr" x="0" y="532" width="76" height="76"/><use href="#wn" x="76" y="532" width="76" height="76"/><use href="#wb" x="152" y="532" width="76" height="76"/><use href="#wq" x="228" y="532" width="76" height="76"/><use href="#wk" x="304" y="532" width="76" height="76"/><use href="#wb" x="380" y="532" width="76" height="76"/><use href="#wr" x="532" y="532" width="76" height="76"/></svg><div style="position:absolute;left:1057px;top:157px;width:4px;height:723px;background:#303030;"></div><div style="position:absolute;left:995px;width:600px;text-align:center;top:160.00px;font-size:13px;line-height:13px;color:#f0f0f0;font-weight:400;white-space:pre;">-</div><div style="position:absolute;left:994px;width:600px;text-align:center;top:178.00px;font-size:13px;line-height:13px;color:#f0f0f0;font-weight:400;white-space:pre;">,</div><div style="position:absolute;left:1528px;top:157px;width:38px;height:32px;background:#333333;"></div><svg style="position:absolute;left:1541px;top:166px;" width="12" height="14" viewBox="0 0 12 14"><rect x="0" y="0" width="12" height="14" fill="#e4e4e4"/><path d="M3.5 2.6 H10 M3.5 4 H6" stroke="#c8c8c8" stroke-width="0.7"/><path d="M7.2 4.3 C5.2 3.8 3.6 5.6 4.3 7.5 C5 9.2 7.3 9.6 8.5 8.3 L10.2 10.4 L10.9 9.6 L9.2 7.6 C9.9 6.6 9.6 5 8.6 4.6 L7.6 6.6 L6.4 6.2 Z" fill="#8c8c8c"/><path d="M7.5 12 L11 13.5 H12 V11" fill="#f6f6f6"/></svg><div style="position:absolute;left:1064px;top:194px;width:502px;height:40px;background:#2d2d2d;"></div><div style="position:absolute;left:801.8px;width:600px;text-align:center;top:205.10px;font-size:13px;line-height:13px;color:#8c8c8c;font-weight:400;white-space:pre;">Moves</div><div style="position:absolute;left:865.7px;width:600px;text-align:center;top:205.10px;font-size:13px;line-height:13px;color:#e6e6e6;font-weight:400;white-space:pre;">Book</div><div style="position:absolute;left:1150px;top:224px;width:34px;height:2px;background:#1d7fd6;"></div><div style="position:absolute;left:1063px;top:234px;width:504px;height:583px;background:#1c1c1c;"></div><div style="position:absolute;left:1064px;top:235px;width:502px;height:36px;background:#333333;"></div><div style="position:absolute;left:1064px;top:272px;width:502px;height:545px;background:#333333;"></div><div style="position:absolute;left:804.8px;width:600px;text-align:center;top:247.20px;font-size:13px;line-height:13px;color:#f0f0f0;font-weight:700;white-space:pre;letter-spacing:0.15px"># Games</div><div style="position:absolute;left:894.8px;width:600px;text-align:center;top:247.20px;font-size:13px;line-height:13px;color:#f0f0f0;font-weight:700;white-space:pre;letter-spacing:0.25px">Move</div><div style="position:absolute;left:1006.2px;width:600px;text-align:center;top:247.20px;font-size:13px;line-height:13px;color:#f0f0f0;font-weight:700;white-space:pre;letter-spacing:0.4px">Win/Draw/Loss</div><svg style="position:absolute;left:1524px;top:245px;" width="14" height="17" viewBox="0 0 14 17"><path d="M7 1 V15 M2 10 L7 15 L12 10" fill="none" stroke="#f0f0f0" stroke-width="1.2"/></svg><div style="position:absolute;left:537px;width:600px;text-align:right;top:283.20px;font-size:13px;line-height:13px;color:#e6e6e6;font-weight:400;white-space:pre;">11</div><div style="position:absolute;left:1177.2px;top:283.20px;font-size:13px;line-height:13px;color:#e6e6e6;font-weight:400;white-space:pre;">Bb5</div><div style="position:absolute;left:1257.0px;top:280px;width:145.8px;height:18px;background:#006400;"></div><div style="position:absolute;left:1029.9px;width:600px;text-align:center;top:283.20px;font-size:13px;line-height:13px;color:#f0f0f0;font-weight:400;white-space:pre;">54%</div><div style="position:absolute;left:1402.8px;top:280px;width:75.6px;height:18px;background:#8b4513;"></div><div style="position:absolute;left:1140.6px;width:600px;text-align:center;top:283.20px;font-size:13px;line-height:13px;color:#f0f0f0;font-weight:400;white-space:pre;">28%</div><div style="position:absolute;left:1478.4px;top:280px;width:48.6px;height:18px;background:#8b0000;"></div><div style="position:absolute;left:1202.6999999999998px;width:600px;text-align:center;top:283.20px;font-size:13px;line-height:13px;color:#f0f0f0;font-weight:400;white-space:pre;">18%</div><div style="position:absolute;left:537px;width:600px;text-align:right;top:319.20px;font-size:13px;line-height:13px;color:#e6e6e6;font-weight:400;white-space:pre;">9</div><div style="position:absolute;left:1177.2px;top:319.20px;font-size:13px;line-height:13px;color:#e6e6e6;font-weight:400;white-space:pre;">Bb2</div><div style="position:absolute;left:1257.0px;top:316px;width:148.5px;height:18px;background:#006400;"></div><div style="position:absolute;left:1031.25px;width:600px;text-align:center;top:319.20px;font-size:13px;line-height:13px;color:#f0f0f0;font-weight:400;white-space:pre;">55%</div><div style="position:absolute;left:1405.5px;top:316px;width:2.7px;height:18px;background:#8b4513;"></div><div style="position:absolute;left:1408.2px;top:316px;width:118.8px;height:18px;background:#8b0000;"></div><div style="position:absolute;left:1167.6000000000001px;width:600px;text-align:center;top:319.20px;font-size:13px;line-height:13px;color:#f0f0f0;font-weight:400;white-space:pre;">44%</div><div style="position:absolute;left:537px;width:600px;text-align:right;top:355.20px;font-size:13px;line-height:13px;color:#e6e6e6;font-weight:400;white-space:pre;">2</div><div style="position:absolute;left:1177.2px;top:355.20px;font-size:13px;line-height:13px;color:#e6e6e6;font-weight:400;white-space:pre;">d4</div><div style="position:absolute;left:1257.0px;top:352px;width:270.0px;height:18px;background:#8b0000;"></div><div style="position:absolute;left:1092.0px;width:600px;text-align:center;top:355.20px;font-size:13px;line-height:13px;color:#f0f0f0;font-weight:400;white-space:pre;">100%</div><div style="position:absolute;left:537px;width:600px;text-align:right;top:391.20px;font-size:13px;line-height:13px;color:#e6e6e6;font-weight:400;white-space:pre;">1</div><div style="position:absolute;left:1177.2px;top:391.20px;font-size:13px;line-height:13px;color:#e6e6e6;font-weight:400;white-space:pre;">c4</div><div style="position:absolute;left:1257.0px;top:388px;width:270.0px;height:18px;background:#8b4513;"></div><div style="position:absolute;left:1092.0px;width:600px;text-align:center;top:391.20px;font-size:13px;line-height:13px;color:#f0f0f0;font-weight:400;white-space:pre;">100%</div><div style="position:absolute;left:537px;width:600px;text-align:right;top:427.20px;font-size:13px;line-height:13px;color:#e6e6e6;font-weight:400;white-space:pre;">1</div><div style="position:absolute;left:1177.2px;top:427.20px;font-size:13px;line-height:13px;color:#e6e6e6;font-weight:400;white-space:pre;">d3</div><div style="position:absolute;left:1257.0px;top:424px;width:270.0px;height:18px;background:#8b0000;"></div><div style="position:absolute;left:1092.0px;width:600px;text-align:center;top:427.20px;font-size:13px;line-height:13px;color:#f0f0f0;font-weight:400;white-space:pre;">100%</div><div style="position:absolute;left:1063px;top:817px;width:504px;height:17px;background:#242424;"></div><div style="position:absolute;left:1063px;top:817px;width:20px;height:17px;background:#23272c;"></div><div style="position:absolute;left:1083px;top:817px;width:399px;height:17px;background:#52565c;"></div><div style="position:absolute;left:1547px;top:817px;width:20px;height:17px;background:#23272c;"></div><svg style="position:absolute;left:1066px;top:817px;" width="14" height="17" viewBox="0 0 14 17"><path d="M10 4 L4.2 8.5 L10 13" fill="none" stroke="#d0d0d0" stroke-width="1"/></svg><svg style="position:absolute;left:1550px;top:817px;" width="14" height="17" viewBox="0 0 14 17"><path d="M4 4 L9.8 8.5 L4 13" fill="none" stroke="#d0d0d0" stroke-width="1"/></svg><div style="position:absolute;left:1207px;top:834px;width:216px;height:46px;background:#2e2e2e;"></div><svg style="position:absolute;left:1210px;top:838px;" width="220" height="38" viewBox="0 0 220 38"><defs><linearGradient id="ng" x1="0" y1="0" x2="0" y2="1"><stop offset="0" stop-color="#a6dc62"/><stop offset="0.45" stop-color="#86c93a"/><stop offset="0.55" stop-color="#5cb010"/><stop offset="1" stop-color="#62b81a"/></linearGradient></defs><rect x="9.2" y="7" width="4.7" height="23" fill="url(#ng)" stroke="#4a9a08" stroke-width="0.6"/><path d="M13.5,18.5 L26,7 V12.6 H34.5 V24.3 H26 V30 Z" fill="url(#ng)" stroke="#4a9a08" stroke-width="0.6"/><path d="M66.2,18.5 L79.8,7 V12.6 H88.6 V24.3 H79.8 V30 Z" fill="url(#ng)" stroke="#4a9a08" stroke-width="0.6"/><path d="M143.5,18.5 L130,7 V12.6 H121.2 V24.3 H130 V30 Z" fill="url(#ng)" stroke="#4a9a08" stroke-width="0.6"/><path d="M196.5,18.5 L184,7 V12.6 H175 V24.3 H184 V30 Z" fill="url(#ng)" stroke="#4a9a08" stroke-width="0.6"/><rect x="196" y="7" width="4.7" height="23" fill="url(#ng)" stroke="#4a9a08" stroke-width="0.6"/></svg><div style="position:absolute;left:10px;top:882px;width:1558px;height:4px;background:#333333;"></div><div style="position:absolute;left:11px;top:888px;width:41px;height:32px;background:#0078d7;"></div><div style="position:absolute;left:-269px;width:600px;text-align:center;top:898.20px;font-size:13px;line-height:13px;color:#ffffff;font-weight:400;white-space:pre;">On</div><div style="position:absolute;left:-220.4px;width:600px;text-align:center;top:898.20px;font-size:13px;line-height:13px;color:#e6e6e6;font-weight:400;white-space:pre;">Lines:</div><div style="position:absolute;left:103px;top:888px;width:57px;height:32px;background:#333333;"></div><div style="position:absolute;left:-182.3px;width:600px;text-align:center;top:898.20px;font-size:13px;line-height:13px;color:#e6e6e6;font-weight:400;white-space:pre;">+</div><div style="position:absolute;left:-154px;width:600px;text-align:center;top:898.20px;font-size:13px;line-height:13px;color:#e6e6e6;font-weight:400;white-space:pre;">-</div><div style="position:absolute;left:-219px;width:600px;text-align:center;top:933.80px;font-size:13px;line-height:13px;color:#e6e6e6;font-weight:400;white-space:pre;">Stockfish 17 (Elo -1)</div><div style="position:absolute;left:-90.9px;width:600px;text-align:center;top:933.80px;font-size:13px;line-height:13px;color:#e6e6e6;font-weight:400;white-space:pre;">633.14 kn/s</div><div style="position:absolute;left:-261px;width:600px;text-align:center;top:968.80px;font-size:13px;line-height:13px;color:#e6e6e6;font-weight:400;white-space:pre;">(0.00)</div><div style="position:absolute;left:1530px;top:888px;width:38px;height:32px;background:#333333;"></div><svg style="position:absolute;left:1543px;top:897px;" width="12" height="14" viewBox="0 0 12 14"><rect x="0" y="0" width="12" height="14" fill="#e4e4e4"/><path d="M3.5 2.6 H10 M3.5 4 H6" stroke="#c8c8c8" stroke-width="0.7"/><path d="M7.2 4.3 C5.2 3.8 3.6 5.6 4.3 7.5 C5 9.2 7.3 9.6 8.5 8.3 L10.2 10.4 L10.9 9.6 L9.2 7.6 C9.9 6.6 9.6 5 8.6 4.6 L7.6 6.6 L6.4 6.2 Z" fill="#8c8c8c"/><path d="M7.5 12 L11 13.5 H12 V11" fill="#f6f6f6"/></svg><div style="position:absolute;left:1550px;top:921px;width:17px;height:122px;background:#262626;"></div><div style="position:absolute;left:1550px;top:921px;width:17px;height:20px;background:#23272c;"></div><div style="position:absolute;left:1550px;top:941px;width:17px;height:26px;background:#52565c;"></div><div style="position:absolute;left:1550px;top:1023px;width:17px;height:20px;background:#23272c;"></div><svg style="position:absolute;left:1550px;top:921px;" width="17" height="20" viewBox="0 0 17 20"><path d="M4 14 L8.5 8.2 L13 14" fill="none" stroke="#d0d0d0" stroke-width="1"/></svg><svg style="position:absolute;left:1550px;top:1023px;" width="17" height="20" viewBox="0 0 17 20"><path d="M4 7.5 L8.5 13.5 L13 7.5" fill="none" stroke="#d0d0d0" stroke-width="1"/></svg>
</div></body></html>
